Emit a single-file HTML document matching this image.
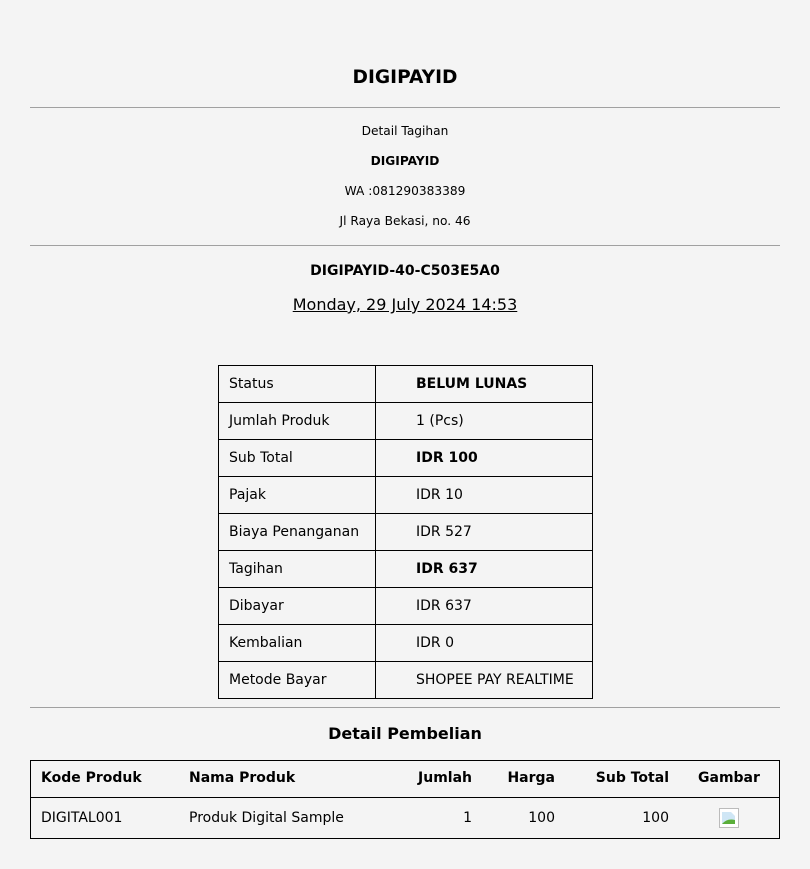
<!DOCTYPE html>
<html><head><meta charset="utf-8"><style>
body{margin:0;background:#f4f4f4;font-family:"DejaVu Sans","Liberation Sans",sans-serif;color:#000;width:810px;height:869px;position:relative;overflow:hidden}
.a{position:absolute;white-space:nowrap}
.c{left:0;width:810px;text-align:center}
.hr{position:absolute;left:30px;width:750px;height:1px;background:#a0a0a0}
.t1{position:absolute;left:218px;top:365px;border-collapse:collapse;font-size:14px;table-layout:fixed}
.t1 td{border:1px solid #000;height:37px;padding:0 0 0 10px;box-sizing:border-box}
.t1 td:first-child{width:157px}
.t1 td:last-child{width:217px;padding-left:40px;padding-right:0}
.box{position:absolute;left:30px;top:760px;width:750px;height:79px;border:1px solid #000;box-sizing:border-box}
.line{position:absolute;left:30px;top:797px;width:750px;height:1px;background:#000}
.h{font-weight:bold;font-size:14px;top:770px}
.d{font-size:14px;top:810px}
</style></head><body>
<div class="a c" style="top:67px;font-size:18.6px;font-weight:bold">DIGIPAYID</div>
<div class="hr" style="top:107px"></div>
<div class="a c" style="top:124px;font-size:12.2px">Detail Tagihan</div>
<div class="a c" style="top:154px;font-size:12.2px;font-weight:bold">DIGIPAYID</div>
<div class="a c" style="top:184px;font-size:12.2px">WA :081290383389</div>
<div class="a c" style="top:214px;font-size:12.2px">Jl Raya Bekasi, no. 46</div>
<div class="hr" style="top:245px"></div>
<div class="a c" style="top:263px;font-size:14px;font-weight:bold">DIGIPAYID-40-C503E5A0</div>
<div class="a c" style="top:295px;font-size:16px;text-decoration:underline">Monday, 29 July 2024 14:53</div>
<table class="t1">
<tr><td>Status</td><td><b>BELUM LUNAS</b></td></tr>
<tr><td>Jumlah Produk</td><td>1 (Pcs)</td></tr>
<tr><td>Sub Total</td><td><b>IDR 100</b></td></tr>
<tr><td>Pajak</td><td>IDR 10</td></tr>
<tr><td>Biaya Penanganan</td><td>IDR 527</td></tr>
<tr><td>Tagihan</td><td><b>IDR 637</b></td></tr>
<tr><td>Dibayar</td><td>IDR 637</td></tr>
<tr><td>Kembalian</td><td>IDR 0</td></tr>
<tr><td>Metode Bayar</td><td>SHOPEE PAY REALTIME</td></tr>
</table>
<div class="hr" style="top:707px"></div>
<div class="a c" style="top:724px;font-size:16px;font-weight:bold">Detail Pembelian</div>
<div class="box"></div><div class="line"></div>
<div class="a h" style="left:41px">Kode Produk</div>
<div class="a h" style="left:189px">Nama Produk</div>
<div class="a h" style="right:338px">Jumlah</div>
<div class="a h" style="right:255px">Harga</div>
<div class="a h" style="right:141px">Sub Total</div>
<div class="a h" style="left:698px">Gambar</div>
<div class="a d" style="left:41px">DIGITAL001</div>
<div class="a d" style="left:189px">Produk Digital Sample</div>
<div class="a d" style="right:338px">1</div>
<div class="a d" style="right:255px">100</div>
<div class="a d" style="right:141px">100</div>
<svg class="a" style="left:719px;top:808px" width="20" height="20" viewBox="0 0 20 20"><rect x="0.5" y="0.5" width="19" height="19" fill="#fff" stroke="#bbb"/><path d="M3 16 L3 4 L12 4 L16 8 L16 16 Z" fill="#cfe6f5"/><path d="M3 16 Q8 10 16 12 L16 16 Z" fill="#5aae3a"/></svg>
</body></html>
